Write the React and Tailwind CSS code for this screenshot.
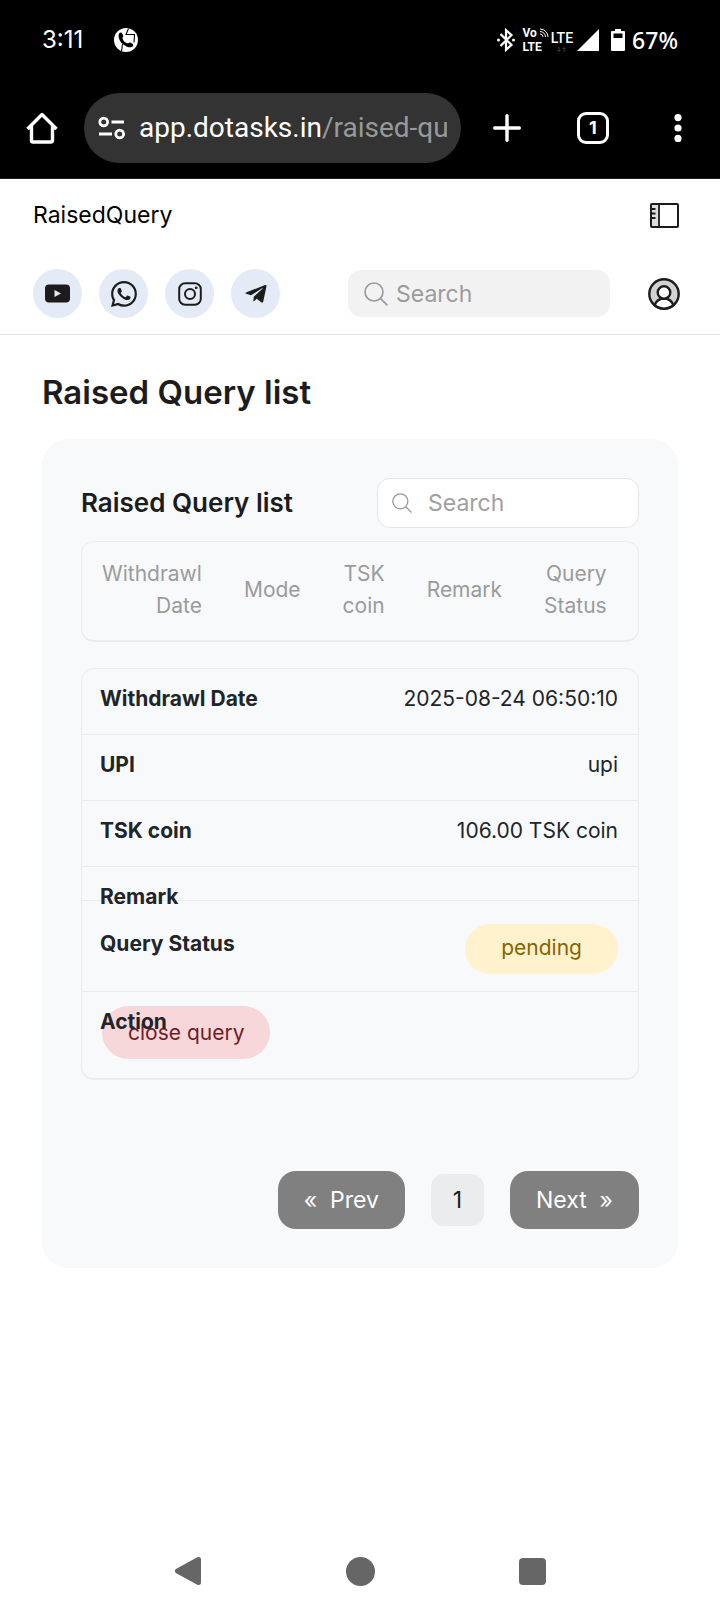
import React, { useState } from 'react';
import { BsWhatsapp } from 'react-icons/bs';
import { FaTelegramPlane } from 'react-icons/fa';

const columns = ['Withdrawl Date', 'Mode', 'TSK coin', 'Remark', 'Query Status'];

const query = {
    date: '2025-08-24 06:50:10',
    mode: 'upi',
    amount: '106.00 TSK coin',
    status: 'pending',
};

const SearchIcon = ({ className }) => (
    <svg className={className} viewBox="0 0 24 24" fill="none" stroke="currentColor" strokeWidth="1.6" aria-hidden="true">
        <circle cx="10" cy="10" r="9" />
        <path d="M16.4 16.4 23.4 23.4" />
    </svg>
);

const YoutubeIcon = () => (
    <svg className="w-[25px] h-[19px]" viewBox="0 0 25 19" aria-hidden="true">
        <rect x="0" y="0.5" width="25" height="18" rx="4" fill="#1c1c1c" />
        <path d="M9.5 6v7l6.5-3.5z" fill="#e5ebf6" />
    </svg>
);

const InstagramIcon = () => (
    <svg className="w-6 h-6" viewBox="0 0 24 24" fill="none" stroke="#1c1c1c" strokeWidth="2" aria-hidden="true">
        <rect x="1.2" y="1.2" width="21.6" height="21.6" rx="6" />
        <circle cx="12" cy="12" r="5" />
        <circle cx="18.2" cy="5.8" r="1.4" fill="#1c1c1c" stroke="none" />
    </svg>
);

const StatusBar = () => (
    <div className="flex items-center h-20 pl-[42px] pr-[42px] text-white">
        <span className="w-[72px] text-[24px] leading-8" style={{ fontFamily: 'Inter, sans-serif' }}>3:11</span>
        <svg className="w-6 h-6" viewBox="0 0 24 24" aria-hidden="true">
            <circle cx="12" cy="12" r="12" fill="#fff" />
            <path d="M14.5 0.5 12 6.500H21M20.5 7 20 14.500M7.500 23.500 8.500 16" stroke="#000" strokeWidth="1.1" fill="none" />
            <path d="M5.200 5.500c.8-1.200 2.300-1.200 3 0l1 2c.5 1-.8 1.800-.7 2.800.6 2.600 2.300 4.400 4.900 5 1 .1 1.800-1.200 2.800-.7l2.300 1.200c1.200.8 1 2.300-.2 3-1.500.8-3.500.7-5.300-.1C8.700 16.800 6 14 5 10.500c-.5-1.700-.6-3.700.2-5z" fill="#000" />
        </svg>

        <div className="flex items-center ml-auto">
            <svg className="w-[18px] h-6" viewBox="0 0 18 24" fill="none" stroke="#fff" strokeWidth="2.2" aria-hidden="true">
                <path d="M3.500 6 14.500 17 9 21.800V2.200L14.500 7 3.500 18" />
                <circle cx="1.500" cy="12" r="1.500" fill="#fff" stroke="none" />
                <circle cx="16.500" cy="12" r="1.500" fill="#fff" stroke="none" />
            </svg>
            <div className="flex flex-col ml-[7px] text-[12px] leading-[14px] font-bold" style={{ fontFamily: 'Roboto, sans-serif' }}>
                <span className="flex items-center">
                    Vo
                    <svg className="w-[10px] h-[10px] ml-[2px]" viewBox="0 0 10 10" fill="none" stroke="#fff" strokeWidth="1" aria-hidden="true">
                        <path d="M1 1a8 8 0 0 1 8 8M1 3.500A5.500 5.500 0 0 1 6.500 9M1 6a3 3 0 0 1 3 3" />
                    </svg>
                </span>
                <span>LTE</span>
            </div>
            <div className="flex flex-col items-center ml-[2px]">
                <span className="text-[14px] leading-[18px] font-medium" style={{ fontFamily: 'Roboto, sans-serif' }}>LTE</span>
                <svg className="w-[9px] h-[5px]" viewBox="0 0 9 5" fill="none" stroke="#444" strokeWidth="1" aria-hidden="true">
                    <path d="M2 0v4M0.500 3 2 4.500 3.500 3M7 5V1M5.500 2 7 .5 8.500 2" />
                </svg>
            </div>
            <svg className="w-[22px] h-[22px] ml-1" viewBox="0 0 22 22" aria-hidden="true">
                <path d="M22 0v22H0z" fill="#fff" />
            </svg>
            <svg className="w-[14px] h-[22px] ml-3" viewBox="0 0 14 22" aria-hidden="true">
                <path d="M4 0h6v2h3a1 1 0 0 1 1 1v18a1 1 0 0 1-1 1H1a1 1 0 0 1-1-1V3a1 1 0 0 1 1-1h3zM2.500 4.500V9h9V4.500z" fill="#fff" fillRule="evenodd" />
            </svg>
            <span className="text-[23px] leading-8 font-medium ml-[7px]" style={{ fontFamily: '"Noto Sans", sans-serif' }}>67%</span>
        </div>
    </div>
);

const BrowserBar = () => (
    <div className="flex items-center pt-[13px] pb-[15px] text-white border-b border-[#1f1f1f]">
        <button type="button" aria-label="Home" className="flex justify-center w-[84px] shrink-0">
            <svg className="w-8 h-8" viewBox="0 0 32 32" fill="none" stroke="#fff" strokeWidth="3.4" strokeLinejoin="round" aria-hidden="true">
                <path d="M1.500 17 16 2.500 30.500 17M5.500 14v14.500a1.500 1.500 0 0 0 1.500 1.500h18a1.500 1.500 0 0 0 1.500-1.500V14" />
            </svg>
        </button>
        <button type="button" className="flex items-center flex-1 min-w-0 h-[70px] px-[14px] mr-[3px] rounded-full bg-[#333333] text-left">
            <svg className="w-[27px] h-6 shrink-0" viewBox="0 0 27 24" fill="none" stroke="#fff" strokeWidth="2.800" aria-hidden="true">
                <circle cx="5.700" cy="6" r="3.900" />
                <path d="M13.500 6H26M1 18h13" />
                <circle cx="21.700" cy="18" r="3.900" />
            </svg>
            <span className="flex-1 ml-[14px] overflow-hidden whitespace-nowrap text-[28px] leading-10" style={{ fontFamily: 'Roboto, sans-serif' }}>
                app.dotasks.in<span className="text-[#999999]">/raised-query</span>
            </span>
        </button>
        <button type="button" aria-label="New tab" className="flex justify-center w-[86px] shrink-0">
            <svg className="w-7 h-7" viewBox="0 0 28 28" stroke="#fff" strokeWidth="3.400" strokeLinecap="round" aria-hidden="true">
                <path d="M14 1.700v24.600M1.700 14h24.600" />
            </svg>
        </button>
        <button type="button" aria-label="Switch tabs" className="flex justify-center w-[86px] shrink-0">
            <span className="flex items-center justify-center w-8 h-8 border-[3px] border-white rounded-[9px] text-[18px] leading-6 font-bold" style={{ fontFamily: 'Inter, sans-serif' }}>1</span>
        </button>
        <button type="button" aria-label="Menu" className="flex justify-center w-[84px] shrink-0">
            <svg className="w-2 h-7" viewBox="0 0 8 28" fill="#fff" aria-hidden="true">
                <circle cx="4" cy="3.600" r="3.600" />
                <circle cx="4" cy="14" r="3.600" />
                <circle cx="4" cy="24.400" r="3.600" />
            </svg>
        </button>
    </div>
);

const SocialLink = ({ label, children }) => (
    <a href="#" aria-label={label} className="flex items-center justify-center w-[49px] h-[49px] rounded-full bg-[#e5ebf6] text-[#1c1c1c]">
        {children}
    </a>
);

const AppHeader = () => (
    <header className="px-[33px] pt-5 pb-4 border-b border-[#e6e6e6]">
        <div className="flex items-center justify-between h-8 pr-2">
            <span className="text-[23px] leading-8 text-black">RaisedQuery</span>
            <button type="button" aria-label="Toggle sidebar">
                <svg className="w-[29px] h-[25px]" viewBox="0 0 29 25" fill="none" stroke="#1c1c1c" strokeWidth="2" aria-hidden="true">
                    <path d="M1 1h8v23H1z" fill="#dedede" stroke="none" />
                    <rect x="1" y="1" width="27" height="23" rx="1" />
                    <path d="M9 1v23M1 6h4.500M1 10.500h4.500M1 15h4.500" strokeWidth="1.800" />
                </svg>
            </button>
        </div>
        <div className="flex items-center mt-[38px]">
            <div className="flex gap-[17px]">
                <SocialLink label="YouTube"><YoutubeIcon /></SocialLink>
                <SocialLink label="WhatsApp"><BsWhatsapp className="w-[26px] h-[26px]" /></SocialLink>
                <SocialLink label="Instagram"><InstagramIcon /></SocialLink>
                <SocialLink label="Telegram"><FaTelegramPlane className="w-6 h-6" /></SocialLink>
            </div>
            <label className="flex items-center w-[262px] h-[47px] px-4 ml-auto rounded-[13px] bg-[#f2f2f2] text-[#999999]">
                <SearchIcon className="w-6 h-6 shrink-0" />
                <input type="search" aria-label="Search" placeholder="Search" className="w-full min-w-0 ml-2 text-[23px] leading-8 bg-transparent outline-none text-[#1c1c1c] placeholder:text-[#9c9c9c]" />
            </label>
            <button type="button" aria-label="Account" className="ml-[38px] mr-[7px]">
                <svg className="w-8 h-8" viewBox="0 0 32 32" stroke="#1c1c1c" strokeWidth="2.400" aria-hidden="true">
                    <circle cx="16" cy="16" r="14.700" fill="#d2d2d2" />
                    <path d="M6.500 27C8.500 22.500 12 20.500 16 20.500s7.500 2 9.500 6.500C20 31.800 12 31.800 6.500 27z" fill="#fff" />
                    <circle cx="16" cy="14.500" r="6.300" fill="#fff" />
                </svg>
            </button>
        </div>
    </header>
);

const Row = ({ label, labelClass = '', className = '', children }) => (
    <tr className="block border-b border-[#ebecee] last:border-b-0">
        <td className={`relative flex justify-between pl-[18px] pr-5 pt-[14px] pb-[19px] ${className}`}>
            <span className={`font-bold ${labelClass}`}>{label}</span>
            {children}
        </td>
    </tr>
);

const QueryTable = () => (
    <table className="block mt-[13px] text-[21px] leading-8">
        <thead className="block border border-b-2 border-[#ebecee] rounded-[13px]">
            <tr className="flex items-center gap-[42px] px-5 pt-4 pb-[18px] text-[#9a9b9c]">
                {columns.map((name) => (
                    <th key={name} scope="col" className="w-min font-normal text-right">{name}</th>
                ))}
            </tr>
        </thead>
        <tbody className="block mt-[26px] border border-b-2 border-[#ebecee] rounded-[13px] text-[#212529]">
            <Row label="Withdrawl Date">{query.date}</Row>
            <Row label="UPI">{query.mode}</Row>
            <Row label="TSK coin">{query.amount}</Row>
            <Row label="Remark" labelClass="absolute" />
            <Row label="Query Status" className="pt-[27px]">
                <span className="h-[50px] px-9 py-[8px] -mt-1 -mb-[2px] rounded-full bg-[#fff2cd] text-[#856404]">{query.status}</span>
            </Row>
            <Row label="Action" labelClass="absolute z-10">
                <button type="button" className="h-[53px] ml-[2px] px-[26px] rounded-full bg-[#f8d7da] text-[#721c24]">close query</button>
            </Row>
        </tbody>
    </table>
);

const Pagination = () => {
    const [page, setPage] = useState(1);

    return (
        <nav aria-label="Pagination" className="flex items-center justify-end gap-[26px] mt-[91px] text-[23px] leading-8">
            <button type="button" onClick={() => setPage(Math.max(1, page - 1))} className="h-[58px] px-[26px] rounded-[18px] bg-[#808080] text-white">
                «&nbsp; Prev
            </button>
            <span className="flex items-center justify-center w-[53px] h-[52px] rounded-[13px] bg-[#ebecee] text-[#1c1c1c]">{page}</span>
            <button type="button" className="h-[58px] px-[26px] rounded-[18px] bg-[#808080] text-white">
                Next &nbsp;»
            </button>
        </nav>
    );
};

const App = () => {
    return (
        <div className="flex flex-col min-h-screen bg-white text-[#1c1c1c]" style={{ fontFamily: 'Inter, sans-serif' }}>
            <div className="bg-black">
                <StatusBar />
                <BrowserBar />
            </div>

            <AppHeader />

            <main className="flex-1 px-[42px] pt-[35px]">
                <h1 className="text-[33px] leading-[44px] font-semibold">Raised Query list</h1>

                <section className="mt-[25px] px-[39px] py-[39px] rounded-[26px] bg-[#f8f9fb]">
                    <div className="flex items-center justify-between">
                        <h2 className="text-[26px] leading-9 font-semibold">Raised Query list</h2>
                        <label className="flex items-center w-[262px] h-[50px] px-[14px] border border-[#e6e6e8] rounded-[13px] bg-white text-[#999999]">
                            <SearchIcon className="w-5 h-5 shrink-0" />
                            <input type="search" aria-label="Search queries" placeholder="Search" className="w-full min-w-0 ml-4 text-[23px] leading-8 bg-transparent outline-none text-[#1c1c1c] placeholder:text-[#a0a0a0]" />
                        </label>
                    </div>
                    <QueryTable />
                    <Pagination />
                </section>
            </main>

            {/* System navigation */}
            <div className="flex items-center justify-center gap-[144px] h-[82px] text-[#666666]">
                <button type="button" aria-label="Back">
                    <svg className="w-[28px] h-[30px]" viewBox="0 0 28 30" fill="currentColor" stroke="currentColor" strokeWidth="5" strokeLinejoin="round" aria-hidden="true">
                        <path d="M24.500 3.500v23L3.500 15z" />
                    </svg>
                </button>
                <button type="button" aria-label="Home screen" className="w-[29px] h-[29px] rounded-full bg-[#666666]" />
                <button type="button" aria-label="Recent apps" className="w-[27px] h-[27px] rounded-[4px] bg-[#666666]" />
            </div>
        </div>
    );
};

export default App;
